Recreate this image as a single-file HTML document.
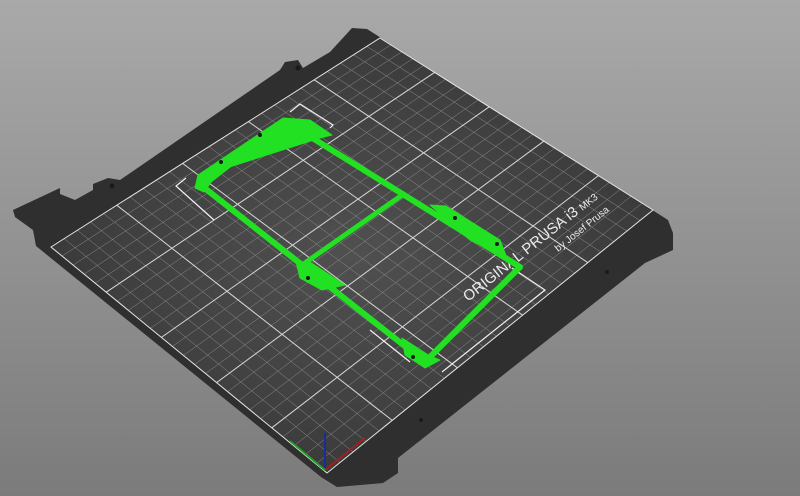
<!DOCTYPE html>
<html><head><meta charset="utf-8"><style>
html,body{margin:0;padding:0;width:800px;height:496px;overflow:hidden;background:linear-gradient(#a9a9a9,#7b7b7b);}
svg{display:block}
</style></head><body>
<svg id="s" width="800" height="496" viewBox="0 0 800 496" xmlns="http://www.w3.org/2000/svg">
<defs>
<radialGradient id="g" cx="0.5" cy="0.5" r="0.6">
<stop offset="0" stop-color="#505050"/><stop offset="1" stop-color="#363636"/>
</radialGradient>
</defs>
<polygon fill="#2f2f2f" points="352,28 367,29 668,220 673,233 673,250 645,263 398,458 398,473 383,483 337,487 321,477 36,246 33,230 15,217 13,210 60,188 60,194 75,200 93,190 93,184 108,178 120,180 280,70 285,62 298,60 303,68 330,52"/>
<polygon id="bed" fill="url(#g)" points="380,38 653,210 327,473 51,247"/>
<g id="grid" stroke="#8e8e8e" stroke-width="0.5" fill="none"></g>
<g id="grid2" stroke="#d8d8d8" stroke-width="1" fill="none"></g>
<polygon fill="none" stroke="#e6e6e6" stroke-width="1" points="380,38 653,210 327,473 51,247"/>
<text x="0" y="0" fill="#ececec" font-family="Liberation Sans, sans-serif" font-size="15" transform="translate(468,302) rotate(-38.5)">ORIGINAL PRUSA i3 <tspan font-size="10">MK3</tspan></text>
<text x="0" y="0" fill="#ececec" font-family="Liberation Sans, sans-serif" font-size="10" transform="translate(558,252) rotate(-38.5)">by Josef Prusa</text>
<g fill="none" stroke="#f2f2f2" stroke-width="1.2">
<polyline points="290,112 300,104 333,125 330,128"/>
<polyline points="186,178 176,186 214,220"/>
<polyline points="512,268 545,290 442,372"/>
<polyline points="370,330 410,362"/>
</g>
<g fill="#22e022" stroke="#22e022" stroke-linejoin="round">
<polygon stroke-width="6" fill="none" points="285,121 520,267 425,362 202,186"/>
<line x1="302" y1="265" x2="405" y2="193" stroke-width="5"/>
<polygon stroke-width="1" points="198,175 283,118 310,120 332,135 320,138 220,170 204,192 195,188"/>
<polygon stroke-width="1" points="430,205 446,206 500,240 507,258 470,240"/>
<polygon stroke-width="1" points="296,262 310,262 345,285 322,290 300,278"/>
<polygon stroke-width="1" points="402,338 430,356 440,360 425,368 405,355"/>
</g>
<g fill="#1a1a1a">
<circle cx="260" cy="135" r="2"/><circle cx="221" cy="162" r="2"/><circle cx="455" cy="218" r="2"/><circle cx="497" cy="244" r="2"/>
<circle cx="308" cy="278" r="2"/><circle cx="413" cy="357" r="2"/><circle cx="298" cy="68" r="2.5"/><circle cx="112" cy="186" r="2.5"/>
<circle cx="607" cy="272" r="2"/><circle cx="421" cy="420" r="2"/>
</g>
<line x1="325" y1="470" x2="325" y2="433" stroke="#1a2aa0" stroke-width="2"/>
<line x1="325" y1="470" x2="365" y2="438" stroke="#a02020" stroke-width="2"/>
<line x1="325" y1="470" x2="290" y2="441" stroke="#20a020" stroke-width="2"/>
</svg>
<script>
(function(){
var A=[380,38],B=[653,210],C=[327,473],D=[51,247];
function L(p,q,t){return [p[0]+(q[0]-p[0])*t,p[1]+(q[1]-p[1])*t];}
var g=document.getElementById('grid'),g2=document.getElementById('grid2'),ns='http://www.w3.org/2000/svg';
var n=25;
for(var i=1;i<n;i++){var t=i/n;
 var p1=L(A,B,t),p2=L(D,C,t),q1=L(A,D,t),q2=L(B,C,t);
 [[p1,p2],[q1,q2]].forEach(function(s){var l=document.createElementNS(ns,'line');
 l.setAttribute('x1',s[0][0]);l.setAttribute('y1',s[0][1]);l.setAttribute('x2',s[1][0]);l.setAttribute('y2',s[1][1]);
 (i%5==0?g2:g).appendChild(l);});
}
})();
</script>
</body></html>
